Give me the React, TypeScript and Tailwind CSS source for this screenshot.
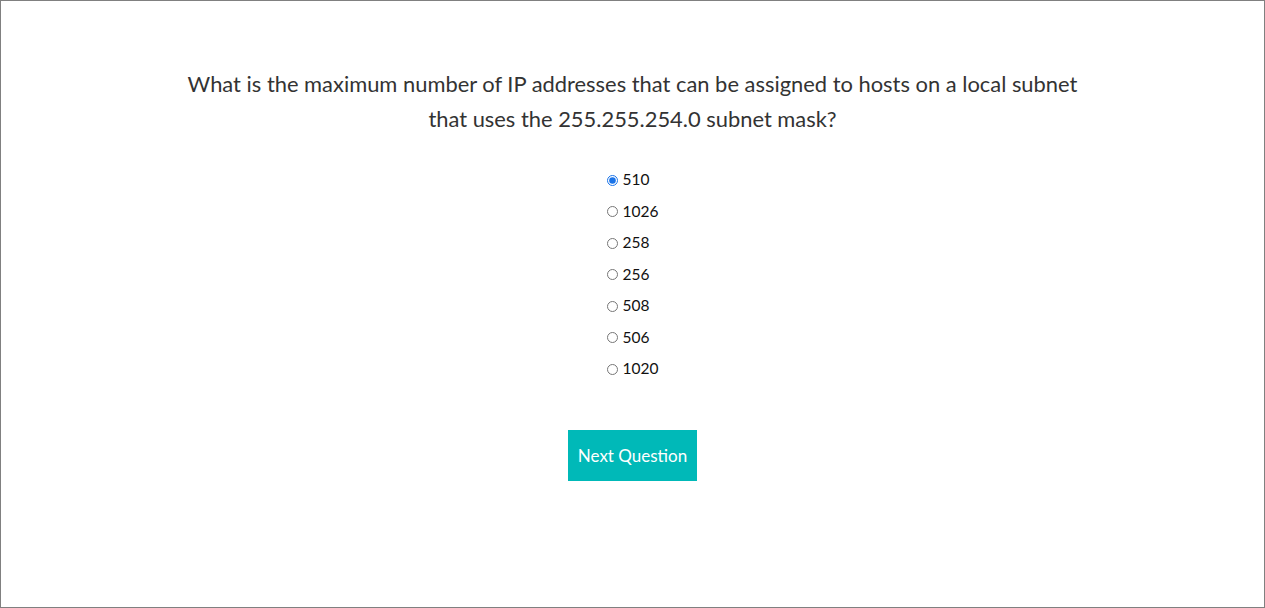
import React from "react";

const options = ["510", "1026", "258", "256", "508", "506", "1020"];

export default function App() {
  return (
    <div
      className="w-[1265px] h-[608px] bg-white border border-[#808080] flex flex-col items-center text-[#333333]"
      style={{ fontFamily: "Lato, 'Open Sans', sans-serif" }}
    >
      <div className="mt-[65px] w-[920px] text-center text-[21.9px] leading-[35px]">
        What is the maximum number of IP addresses that can be assigned to hosts on a local subnet
        <br />
        that uses the 255.255.254.0 subnet mask?
      </div>
      <div className="mt-[34px] flex flex-col gap-[11.5px]">
        {options.map((o, i) => (
          <label key={o} className="flex items-center h-[20px] text-[15.5px] text-[#111111]">
            <input
              type="radio"
              name="q"
              defaultChecked={i === 0}
              className="w-[11px] h-[11px] m-0 mr-[5px] accent-[#1a73e8]"
            />
            {o}
          </label>
        ))}
      </div>
      <button className="mt-[51px] w-[129px] h-[51px] bg-[#00b9b8] text-white text-[17px]">
        Next Question
      </button>
    </div>
  );
}
